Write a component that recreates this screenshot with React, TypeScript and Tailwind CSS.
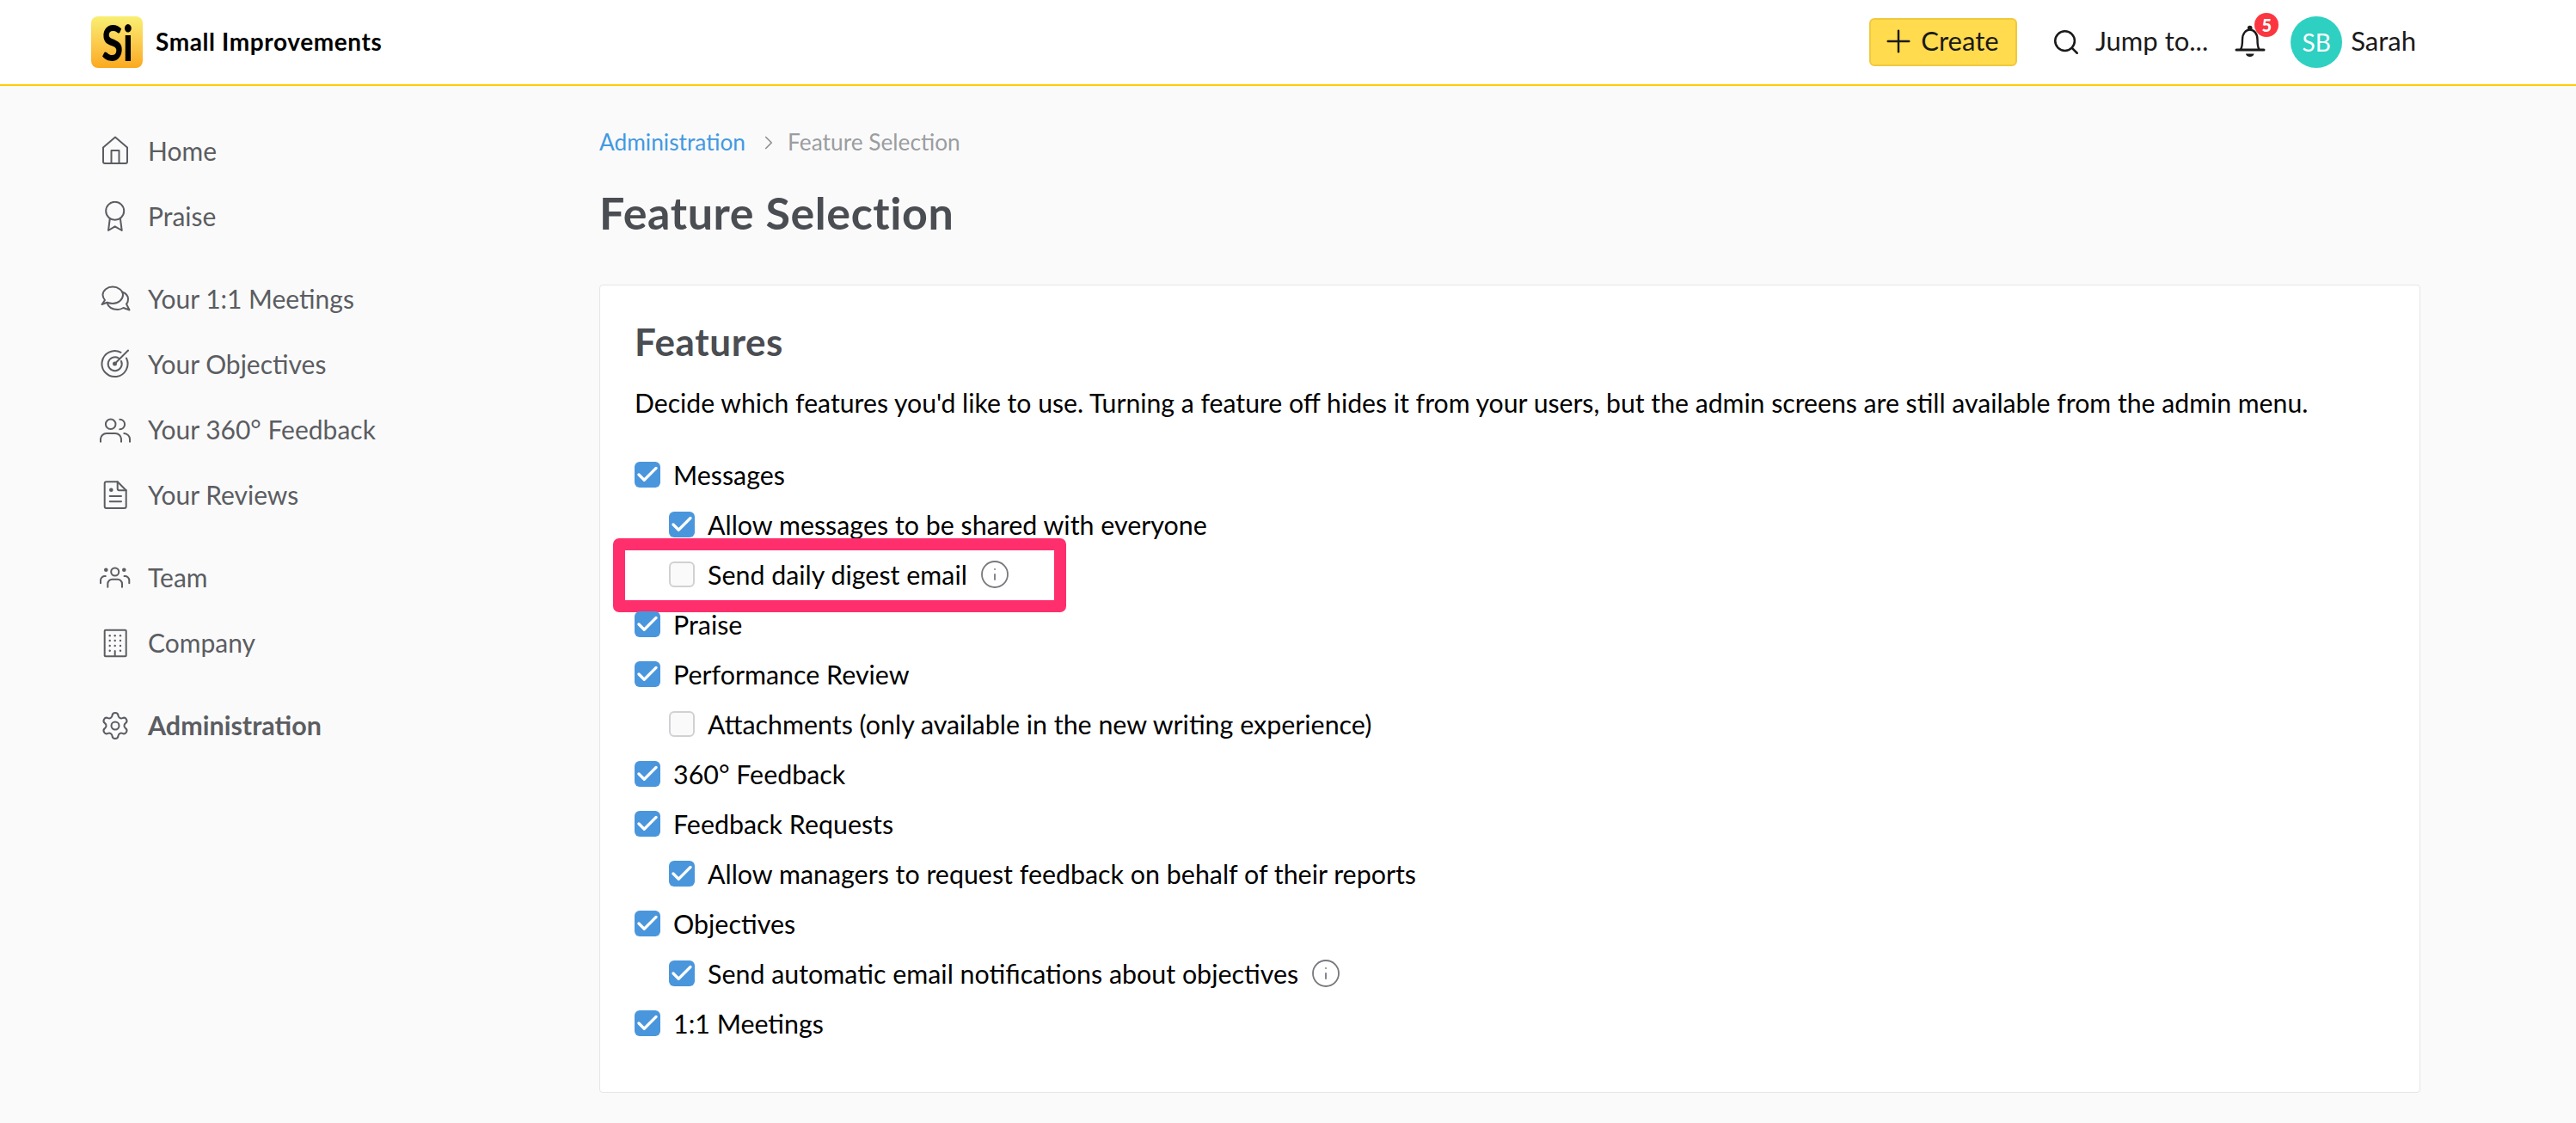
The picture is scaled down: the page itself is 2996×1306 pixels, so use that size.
import { ChevronRight, Info, Plus, Search, Check, Settings } from 'lucide-react';
import type { ReactNode } from 'react';

const stroke = {
  fill: 'none',
  stroke: 'currentColor',
  strokeWidth: 2,
  strokeLinecap: 'round' as const,
  strokeLinejoin: 'round' as const,
};

function NavIcon({ children }: { children: ReactNode }) {
  return (
    <svg viewBox="0 0 36 36" className="w-9 h-9 shrink-0 text-[#5b5d62]" {...stroke}>
      {children}
    </svg>
  );
}

const HomeIcon = () => (
  <NavIcon>
    <path d="M4 13.5 18 1.500l14 12V30a2 2 0 0 1-2 2H6a2 2 0 0 1-2-2Z" />
    <path d="M13.500 32V17h9v15" />
  </NavIcon>
);
const PraiseIcon = () => (
  <NavIcon>
    <circle cx="17.700" cy="11.300" r="10.500" />
    <path d="M11.700 21 10 34l7.700-4.700L25.700 34 24 21" />
  </NavIcon>
);
const MeetingsIcon = () => (
  <NavIcon>
    <path d="M2.500 24 6 19C4.500 17 3.500 15 3.500 13 3.500 7.500 9 3.500 15 3.500S27 7.500 27 13s-5.500 10-12 10c-2.500 0-4.500-.5-6.500-1.200Z" />
    <path d="M26 9.500c4.500 1.500 7 4.500 7 8.500 0 2-.5 4-2 5.500l3.500 7-7-2.500c-2.500 1.500-4.500 2-6.500 2-6 0-11-2.500-12.500-8" />
  </NavIcon>
);
const ObjectivesIcon = () => (
  <NavIcon>
    <path d="M24.500 3.800A15 15 0 1 0 31 10.500" />
    <path d="M22 10.500A8 8 0 1 0 25 14" />
    <circle cx="17.500" cy="17" r="1.500" />
    <path d="M17.500 17 33 1.500" />
  </NavIcon>
);
const FeedbackIcon = () => (
  <NavIcon>
    <circle cx="12.700" cy="11.300" r="5.800" />
    <path d="M1 31.700V29a7 7 0 0 1 7-7h10a7 7 0 0 1 7 7v2.700" />
    <path d="M23.300 5.700a5.800 5.800 0 0 1 0 11.600" />
    <path d="M28.300 22a7 7 0 0 1 6.700 7v2.700" />
  </NavIcon>
);
const ReviewsIcon = () => (
  <NavIcon>
    <path d="M5.700 4.300a2 2 0 0 1 2-2h13l10 10V31a2 2 0 0 1-2 2h-21a2 2 0 0 1-2-2Z" />
    <path d="M20.700 2.300v8a2 2 0 0 0 2 2h8" />
    <circle cx="13.300" cy="11.700" r="1.300" fill="currentColor" />
    <path d="M11.700 19H25M11.700 25.300H25" />
  </NavIcon>
);
const TeamIcon = () => (
  <NavIcon>
    <circle cx="17.700" cy="11" r="4.500" />
    <path d="M9.300 28.700V25a5.300 5.300 0 0 1 5.300-5.300h6.100A5.300 5.300 0 0 1 26 25v3.700" />
    <circle cx="7.300" cy="8.700" r="1.300" fill="currentColor" />
    <circle cx="28.300" cy="8.700" r="1.300" fill="currentColor" />
    <path d="M1 24.300V21a5 5 0 0 1 5.700-5M34.300 24.300V21a5 5 0 0 0-5.700-5" />
  </NavIcon>
);
const CompanyIcon = () => (
  <NavIcon>
    <rect x="5.700" y="2.700" width="25" height="30.600" rx="1" />
    <g fill="currentColor" stroke="none">
      {[9.3, 15, 21].map((y) =>
        [11.7, 17.7, 24].map((x) => <circle key={`${x}-${y}`} cx={x} cy={y} r="1.200" />),
      )}
      <circle cx="11.700" cy="26.700" r="1.200" />
      <circle cx="24" cy="26.700" r="1.200" />
    </g>
    <path d="M17.700 27v6" />
  </NavIcon>
);
const AdminIcon = () => <Settings className="w-9 h-9 shrink-0 text-[#5b5d62]" strokeWidth={1.35} />;

function BellIcon() {
  return (
    <svg viewBox="0 0 36 40" className="w-9 h-10 text-[#1a1a1a]" fill="none" stroke="currentColor" strokeWidth="2.400" strokeLinecap="round" strokeLinejoin="round">
      <circle cx="17.700" cy="3.500" r="1.600" fill="currentColor" />
      <path d="M7 28.500c2-3 2-7 2-11.500C9 10 13 5.500 17.700 5.500S26.500 10 26.500 17c0 4.500 0 8.500 2 11.500" />
      <path d="M2 29h32" strokeWidth="3" />
      <path d="M13 33.500h9.500a4.750 3.500 0 0 1-9.500 0Z" fill="currentColor" stroke="none" />
    </svg>
  );
}

const navGroups = [
  [
    { label: 'Home', icon: HomeIcon },
    { label: 'Praise', icon: PraiseIcon },
  ],
  [
    { label: 'Your 1:1 Meetings', icon: MeetingsIcon },
    { label: 'Your Objectives', icon: ObjectivesIcon },
    { label: 'Your 360° Feedback', icon: FeedbackIcon },
    { label: 'Your Reviews', icon: ReviewsIcon },
  ],
  [
    { label: 'Team', icon: TeamIcon },
    { label: 'Company', icon: CompanyIcon },
  ],
  [{ label: 'Administration', icon: AdminIcon, active: true }],
];

const features = [
  { label: 'Messages', checked: true },
  { label: 'Allow messages to be shared with everyone', checked: true, child: true },
  { label: 'Send daily digest email', checked: false, child: true, info: true, highlight: true },
  { label: 'Praise', checked: true },
  { label: 'Performance Review', checked: true },
  { label: 'Attachments (only available in the new writing experience)', checked: false, child: true },
  { label: '360° Feedback', checked: true },
  { label: 'Feedback Requests', checked: true },
  { label: 'Allow managers to request feedback on behalf of their reports', checked: true, child: true },
  { label: 'Objectives', checked: true },
  { label: 'Send automatic email notifications about objectives', checked: true, child: true, info: true },
  { label: '1:1 Meetings', checked: true },
];

function Checkbox({ checked }: { checked: boolean }) {
  if (!checked) {
    return <span className="w-[30px] h-[30px] shrink-0 rounded-[6px] border-2 border-[#d0d1d3] bg-[#fafafa]" />;
  }
  return (
    <span className="w-[30px] h-[30px] shrink-0 rounded-[6px] bg-[#4a96dc] flex items-center justify-center">
      <Check className="w-[30px] h-[30px] text-white" strokeWidth={2.6} />
    </span>
  );
}

export default function App() {
  return (
    <div className="min-h-screen bg-[#fafafa] font-['Lato',sans-serif] text-black overflow-hidden">
      {/* Header */}
      <header className="h-[100px] bg-white border-b-2 border-[#ffcc00] pl-[106px] pr-[186px] flex items-center justify-between">
        <div className="flex items-center gap-[15px]">
          <div className="w-[60px] h-[60px] rounded-[8px] bg-gradient-to-b from-[#f8ef72] to-[#fba91b] flex items-center justify-center">
            <span className="font-black text-[58px] leading-none text-black scale-x-[0.78]">Si</span>
          </div>
          <span className="text-[28px] font-bold leading-none tracking-[0.6px] mb-[3px]">Small Improvements</span>
        </div>
        <div className="flex items-center text-[31px] text-[#1a1a1a]">
          <button className="w-[172px] h-[56px] rounded-[6px] bg-[#ffdb4d] border-2 border-[#f0c93c] pb-[3px] flex items-center justify-center gap-[13px]">
            <Plus className="w-[42px] h-[42px] -mx-[8px]" strokeWidth={1.4} />
            Create
          </button>
          <Search className="ml-[40px] w-[34px] h-[34px]" strokeWidth={1.8} />
          <span className="ml-[17px] mb-[3px]">Jump to...</span>
          <div className="relative ml-[31px]">
            <BellIcon />
            <span className="absolute -top-[14px] left-[23px] w-[28px] h-[28px] rounded-full bg-[#fb3640] text-white text-[20px] font-black flex items-center justify-center">5</span>
          </div>
          <div className="ml-[29px] w-[60px] h-[60px] rounded-full bg-[#2ed0c2] text-white text-[28px] flex items-center justify-center">SB</div>
          <span className="ml-[10px] mb-[3px]">Sarah</span>
        </div>
      </header>

      <div className="flex">
        {/* Sidebar */}
        <aside className="w-[697px] shrink-0 pl-[116px] pt-[38px] flex flex-col gap-[20px]">
          {navGroups.map((group, i) => (
            <div key={i}>
              {group.map(({ label, icon: Icon, active }: any) => (
                <div key={label} className="h-[76px] flex items-center gap-[20px] text-[#5b5d62]">
                  <Icon />
                  <span className={`-mt-[1px] ${active ? 'text-[30.5px] font-bold' : 'text-[30px]'}`}>{label}</span>
                </div>
              ))}
            </div>
          ))}
        </aside>

        {/* Main Content */}
        <main className="w-[2118px] pt-[50px]">
          <nav className="h-[32px] flex items-center text-[26.300px] mb-[35px]">
            <span className="text-[#4299e1]">Administration</span>
            <ChevronRight className="w-[26px] h-[26px] ml-[14px] mr-[9px] text-[#8f9195]" strokeWidth={1.6} />
            <span className="text-[#9b9da1]">Feature Selection</span>
          </nav>
          <h1 className="h-[60px] leading-[60px] text-[52px] tracking-[0.6px] font-bold text-[#4a4d52] mb-[54px]">Feature Selection</h1>

          <section className="relative bg-white border border-[#e6e6e6] rounded-[4px] h-[940px] pl-[40px] pt-[40px]">
            <h2 className="h-[50px] leading-[50px] text-[44px] tracking-[0.6px] font-bold text-[#4a4d52] mb-[26px]">Features</h2>
            <p className="h-[40px] leading-[40px] text-[30.200px] mb-[35px]">
              Decide which features you'd like to use. Turning a feature off hides it from your users, but the admin screens are still available from the admin menu.
            </p>
            <div>
              {features.map(({ label, checked, child, info, highlight }) => (
                <div key={label} className={`relative h-[58px] flex items-center gap-[15px] text-[30.400px] ${child ? 'pl-[40px]' : ''}`}>
                  <Checkbox checked={checked} />
                  <span className="mt-[2px]">{label}</span>
                  {info && <Info className="w-[36px] h-[36px] -ml-[1px] text-[#77797d]" strokeWidth={1.2} />}
                  {highlight && (
                    <div className="absolute left-[-25px] top-[-13px] w-[527px] h-[86px] border-[14px] border-[#ff2f6d] rounded-[7px]" />
                  )}
                </div>
              ))}
            </div>
          </section>
        </main>
      </div>
    </div>
  );
}
